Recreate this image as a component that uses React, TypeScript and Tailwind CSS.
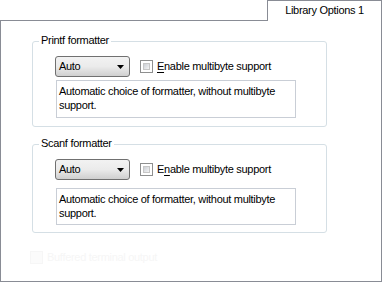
import React from "react";

// Win7-style property page: "Library Options 1"

type GroupProps = {
  title: string;
  accessKey: number; // index of the underlined letter in "Enable"
  gapClass: string;
  boxClass: string;
  frameClass: string;
};

const ComboBox: React.FC = () => (
  <div className="relative flex h-[21px] w-[75px] items-center rounded-[3px] border border-[#707070] bg-gradient-to-b from-[#f2f2f2] via-[#ebebeb] to-[#cfcfcf] pl-[3px]">
    <span>Auto</span>
    <svg
      className="absolute right-[5px] top-[8px]"
      width="7"
      height="4"
      viewBox="0 0 7 4"
    >
      <path d="M0 0h7L3.5 4z" fill="#000" />
    </svg>
  </div>
);

const CheckBox: React.FC<{ faint?: boolean }> = ({ faint }) => (
  <div
    className={
      faint
        ? "h-[13px] w-[13px] border border-[#f6f6f6] bg-[#fbfbfb]"
        : "h-[13px] w-[13px] border border-[#8e8f8f] bg-white p-[2px]"
    }
  >
    {!faint && (
      <div className="h-full w-full border border-[#c6c6c6] bg-gradient-to-br from-[#cbcfd5] to-[#f4f4f4]" />
    )}
  </div>
);

const FormatterGroup: React.FC<GroupProps> = ({
  title,
  accessKey,
  gapClass,
  boxClass,
  frameClass,
}) => {
  const word = "Enable";
  return (
    <div
      className={`relative ml-[31px] w-[295px] rounded-[3px] border border-[#d5dfe5] pl-[22px] pt-[14px] ${frameClass}`}
    >
      <span className="absolute left-[6px] top-[-8px] bg-white px-[2px] leading-[13px]">
        {title}
      </span>

      <div className="flex items-center">
        <ComboBox />
        <div className="ml-[10px] flex items-center">
          <CheckBox />
          <span className="ml-[4px]">
            {word.slice(0, accessKey)}
            <span className="underline underline-offset-2">
              {word[accessKey]}
            </span>
            {word.slice(accessKey + 1)} multibyte support
          </span>
        </div>
      </div>

      <div
        className={`ml-[1px] w-[240px] border border-[#c9ced6] px-[2px] pt-[3px] leading-[14px] ${gapClass} ${boxClass}`}
      >
        Automatic choice of formatter, without multibyte support.
      </div>
    </div>
  );
};

const App: React.FC = () => {
  return (
    <div
      className="h-[282px] w-[383px] bg-white text-[11px] tracking-[-0.3px] text-black"
      style={{ fontFamily: '"Liberation Sans", Arial, sans-serif' }}
    >
      {/* tab strip */}
      <div className="flex justify-end pr-[1px]">
        <div className="relative z-10 -mb-px flex h-[21px] w-[115px] items-center justify-center border-l border-r border-t border-[#898c95] bg-white pb-[1px]">
          Library Options 1
        </div>
      </div>

      {/* page */}
      <div className="h-[262px] w-[382px] border border-[#898c95] pt-[20px]">
        <FormatterGroup
          title="Printf formatter"
          accessKey={0}
          gapClass="mt-[3px]"
          boxClass="h-[38px]"
          frameClass="h-[86px]"
        />
        <div className="h-[17px]" />
        <FormatterGroup
          title="Scanf formatter"
          accessKey={1}
          gapClass="mt-[8px]"
          boxClass="h-[37px]"
          frameClass="h-[89px]"
        />

        {/* leftover, almost invisible option */}
        <div className="ml-[29px] mt-[16px] flex items-center text-[#f6f6f6]">
          <CheckBox faint />
          <span className="ml-[4px]">Buffered terminal output</span>
        </div>
      </div>
    </div>
  );
};

export default App;
